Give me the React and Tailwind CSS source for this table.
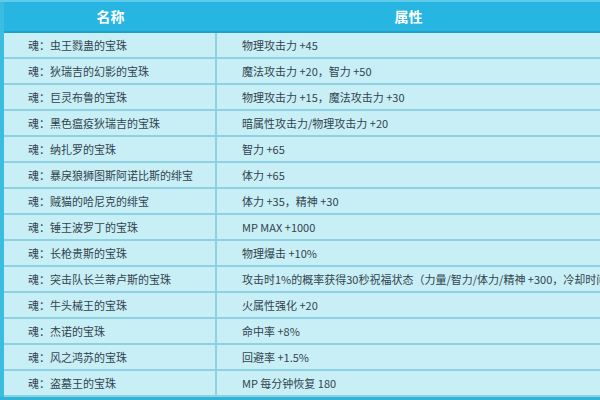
import React from "react";

const rows = [
  ["魂：虫王戮蛊的宝珠", "物理攻击力 +45"],
  ["魂：狄瑞吉的幻影的宝珠", "魔法攻击力 +20，智力 +50"],
  ["魂：巨灵布鲁的宝珠", "物理攻击力 +15，魔法攻击力 +30"],
  ["魂：黑色瘟疫狄瑞吉的宝珠", "暗属性攻击力/物理攻击力 +20"],
  ["魂：纳扎罗的宝珠", "智力 +65"],
  ["魂：暴戾狼狮图斯阿诺比斯的绯宝", "体力 +65"],
  ["魂：贼猫的哈尼克的绯宝", "体力 +35，精神 +30"],
  ["魂：锤王波罗丁的宝珠", "MP MAX +1000"],
  ["魂：长枪贵斯的宝珠", "物理爆击 +10%"],
  ["魂：突击队长兰蒂卢斯的宝珠", "攻击时1%的概率获得30秒祝福状态（力量/智力/体力/精神 +300，冷却时间90秒）"],
  ["魂：牛头械王的宝珠", "火属性强化 +20"],
  ["魂：杰诺的宝珠", "命中率 +8%"],
  ["魂：风之鸿苏的宝珠", "回避率 +1.5%"],
  ["魂：盗墓王的宝珠", "MP 每分钟恢复 180"],
];

export default function App() {
  return (
    <div
      className="w-[600px] h-[400px] overflow-hidden bg-[#3bbde2] pl-[4px] flex flex-col"
      style={{ fontFamily: '"Noto Sans CJK SC", "Noto Sans", sans-serif' }}
    >
      <div className="h-[2px] bg-[#5fcbea] -ml-[4px]" />
      <div className="flex h-[31px] shrink-0 bg-[#27b5e1] border-b-[2px] border-[#1e9fca] text-white font-bold text-[14px]">
        <div className="w-[213px] flex items-center justify-center">名称</div>
        <div className="flex-1 flex items-center justify-center">属性</div>
      </div>
      {rows.map(([name, attr], i) => (
        <div
          key={i}
          className="flex h-[26px] shrink-0 bg-[#c8eff6] border-b-[2px] border-[#8dd2e3] text-[11px] text-[#33434d]"
        >
          <div className="w-[213px] shrink-0 border-r-[2px] border-[#8dd2e3] pl-[24px] flex items-center whitespace-nowrap">
            {name}
          </div>
          <div className="flex-1 pl-[25px] flex items-center whitespace-nowrap overflow-hidden">
            {attr}
          </div>
        </div>
      ))}
      <div className="flex-1 bg-[#2fb4d8] -ml-[4px]" />
    </div>
  );
}
